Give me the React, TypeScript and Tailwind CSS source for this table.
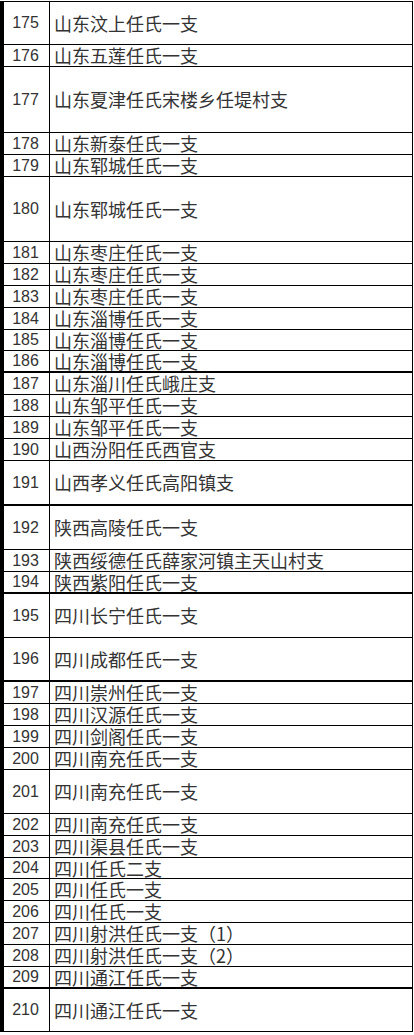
import React from "react";

// [number, name, row height incl. bottom border, thick bottom line]
const rows: [number, string, number, boolean?][] = [
  [175, "山东汶上任氏一支", 43],
  [176, "山东五莲任氏一支", 22],
  [177, "山东夏津任氏宋楼乡任堤村支", 66],
  [178, "山东新泰任氏一支", 22],
  [179, "山东郓城任氏一支", 22],
  [180, "山东郓城任氏一支", 65],
  [181, "山东枣庄任氏一支", 22],
  [182, "山东枣庄任氏一支", 22],
  [183, "山东枣庄任氏一支", 22],
  [184, "山东淄博任氏一支", 22],
  [185, "山东淄博任氏一支", 21],
  [186, "山东淄博任氏一支", 22, true],
  [187, "山东淄川任氏峨庄支", 22],
  [188, "山东邹平任氏一支", 22],
  [189, "山东邹平任氏一支", 22],
  [190, "山西汾阳任氏西官支", 22],
  [191, "山西孝义任氏高阳镇支", 45, true],
  [192, "陕西高陵任氏一支", 44],
  [193, "陕西绥德任氏薛家河镇主天山村支", 22],
  [194, "陕西紫阳任氏一支", 22, true],
  [195, "四川长宁任氏一支", 44],
  [196, "四川成都任氏一支", 44, true],
  [197, "四川崇州任氏一支", 22],
  [198, "四川汉源任氏一支", 22],
  [199, "四川剑阁任氏一支", 22],
  [200, "四川南充任氏一支", 22],
  [201, "四川南充任氏一支", 44],
  [202, "四川南充任氏一支", 22],
  [203, "四川渠县任氏一支", 22],
  [204, "四川任氏二支", 21],
  [205, "四川任氏一支", 22],
  [206, "四川任氏一支", 22],
  [207, "四川射洪任氏一支（1）", 22],
  [208, "四川射洪任氏一支（2）", 22],
  [209, "四川通江任氏一支", 22, true],
  [210, "四川通江任氏一支", 43],
];

export default function App() {
  return (
    <div className="bg-white w-[414px] min-h-[1035px] pt-px">
      <div className="w-[413px] border-t border-r border-l-4 border-black">
        {rows.map(([n, name, h, thick]) => (
          <div
            key={n}
            className={`flex border-black ${thick ? "border-b-2" : "border-b"}`}
            style={{ height: h }}
          >
            <div className="w-[46px] shrink-0 border-r border-black flex items-center justify-center pr-[2px] text-[16px] leading-[18px] text-[#333] font-['Liberation_Sans',Arial,sans-serif]">
              {n}
            </div>
            <div className="flex items-center pl-[4px] pb-px text-[18px] leading-[18px] text-[#333] whitespace-nowrap font-['Noto_Sans_CJK_SC','Noto_Sans',sans-serif]">
              {name}
            </div>
          </div>
        ))}
      </div>
    </div>
  );
}
